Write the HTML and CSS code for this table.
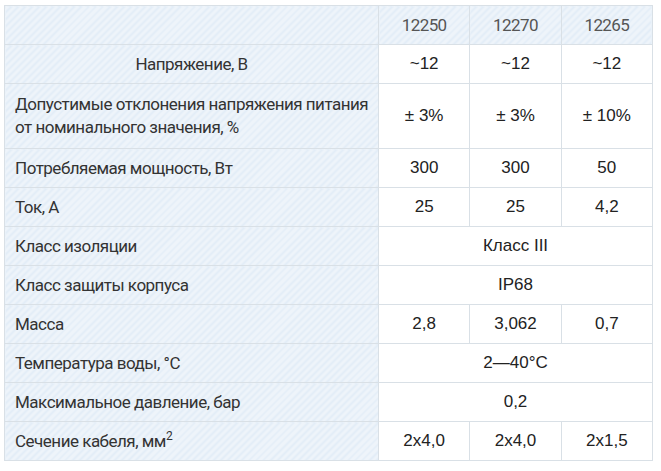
FILE: index.html
```html
<!DOCTYPE html>
<html lang="ru">
<head>
<meta charset="utf-8">
<link rel="stylesheet" href="styles.css">
</head>
<body>
<table class="spec">
  <tr class="head">
    <th class="label"></th>
    <th class="num">12250</th>
    <th class="num">12270</th>
    <th class="num">12265</th>
  </tr>
  <tr>
    <th class="label center">Напряжение, В</th>
    <td>~12</td><td>~12</td><td>~12</td>
  </tr>
  <tr class="tall">
    <th class="label">Допустимые отклонения напряжения питания<br>от номинального значения, %</th>
    <td>± 3%</td><td>± 3%</td><td>± 10%</td>
  </tr>
  <tr>
    <th class="label">Потребляемая мощность, Вт</th>
    <td>300</td><td>300</td><td>50</td>
  </tr>
  <tr>
    <th class="label">Ток, А</th>
    <td>25</td><td>25</td><td>4,2</td>
  </tr>
  <tr>
    <th class="label">Класс изоляции</th>
    <td colspan="3">Класс III</td>
  </tr>
  <tr>
    <th class="label">Класс защиты корпуса</th>
    <td colspan="3">IP68</td>
  </tr>
  <tr>
    <th class="label">Масса</th>
    <td>2,8</td><td>3,062</td><td>0,7</td>
  </tr>
  <tr>
    <th class="label">Температура воды, °С</th>
    <td colspan="3">2—40°С</td>
  </tr>
  <tr>
    <th class="label">Максимальное давление, бар</th>
    <td colspan="3">0,2</td>
  </tr>
  <tr>
    <th class="label">Сечение кабеля, мм<sup>2</sup></th>
    <td>2x4,0</td><td>2x4,0</td><td>2x1,5</td>
  </tr>
</table>
</body>
</html>
```

FILE: styles.css
```css
html, body {
  margin: 0;
  padding: 0;
  background: #ffffff;
}

.spec {
  margin: 5px 0 0 4px;
  border-collapse: collapse;
  width: 649px;
  table-layout: fixed;
}

.spec th, .spec td {
  border: 1px solid #d9e0e6;
  height: 38px;
  padding: 0;
  vertical-align: middle;
}

.spec .label {
  width: 363px;
  padding: 0 0 0 10px;
  text-align: left;
  font-family: Roboto, "Liberation Sans", sans-serif;
  font-weight: 400;
  font-size: 17px;
  letter-spacing: -0.5px;
  color: #333333;
  background: repeating-linear-gradient(135deg, #eef4fa 0 3px, #e3edf7 3px 5px);
}

.spec .label.center {
  text-align: center;
  padding: 0;
}

.spec .label sup {
  font-size: 12px;
  line-height: 0;
  vertical-align: 7px;
}

.spec .head th {
  background: repeating-linear-gradient(135deg, #eef4fa 0 3px, #e3edf7 3px 5px);
}

.spec .num {
  font-family: Roboto, "Liberation Sans", sans-serif;
  font-weight: 400;
  font-size: 17px;
  letter-spacing: -0.6px;
  color: #555555;
  text-align: center;
}

.spec td {
  font-family: "Liberation Sans", Arial, sans-serif;
  font-size: 17px;
  color: #222222;
  text-align: center;
  background: #ffffff;
}

.spec .tall th, .spec .tall td {
  height: 64px;
}

.spec .tall .label {
  line-height: 23px;
}
```
